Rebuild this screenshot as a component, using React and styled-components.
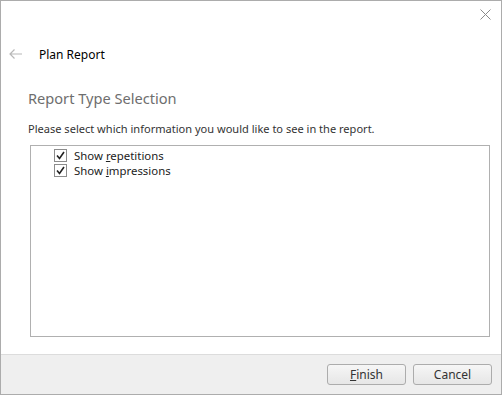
import React from 'react';
import styled, { createGlobalStyle } from 'styled-components';

const Global = createGlobalStyle`
  html, body { margin: 0; padding: 0; background: #fff; }
  body { font-family: "Noto Sans", "Open Sans", sans-serif; }
`;

const Window = styled.div`
  width: 502px;
  height: 395px;
  box-sizing: border-box;
  border: 1px solid #acacac;
  background: #fff;
  display: flex;
  flex-direction: column;
`;

const TitleBar = styled.div`
  height: 40px;
  display: flex;
  justify-content: flex-end;
  align-items: flex-start;
  padding-right: 10px;
  padding-top: 8px;
  box-sizing: border-box;
`;

const Close = styled.button`
  border: none;
  background: none;
  padding: 0;
  width: 11px;
  height: 11px;
  display: flex;
`;

const Header = styled.div`
  display: flex;
  align-items: center;
  height: 26px;
  padding-left: 8px;
  gap: 17px;
  font-size: 12px;
  color: #000;
`;

const Body = styled.div`
  flex: 1;
  display: flex;
  flex-direction: column;
  padding: 0 11px 17px 29px;
`;

const PageTitle = styled.h1`
  margin: 20px 0 0 -2px;
  font-size: 14.6px;
  font-weight: 400;
  color: #6e6e6e;
  line-height: 22px;
`;

const Prompt = styled.p`
  margin: 12px 0 0 -2px;
  font-size: 11.05px;
  color: #333;
  line-height: 16px;
`;

const ListBox = styled.div`
  flex: 1;
  margin-top: 8px;
  border: 1px solid #b0b0b0;
  padding: 2px 0 0 23px;
`;

const Option = styled.label`
  display: flex;
  align-items: center;
  gap: 7px;
  height: 15px;
  line-height: 15px;
  font-size: 11.4px;
  color: #222;
`;

const Box = styled.span`
  width: 11px;
  height: 11px;
  border: 1px solid #8c8c8c;
  background: #fff;
  display: flex;
  align-items: center;
  justify-content: center;
`;

const Footer = styled.div`
  height: 39px;
  background: #efefef;
  border-top: 1px solid #dcdcdc;
  display: flex;
  justify-content: flex-end;
  align-items: center;
  gap: 7px;
  padding-right: 9px;
`;

const Button = styled.button`
  width: 79px;
  height: 21px;
  box-sizing: border-box;
  border: 1px solid #acacac;
  border-radius: 3px;
  background: linear-gradient(#f6f6f6, #e6e6e6);
  font-family: "Noto Sans", sans-serif;
  font-size: 12px;
  color: #333;
  padding: 0;
  line-height: 17px;
`;

const Check = () => (
  <svg width="9" height="9" viewBox="0 0 9 9">
    <path d="M1 4.5 L3.5 7.5 L8 1" fill="none" stroke="#222" strokeWidth="1.6" />
  </svg>
);

const App = () => {
  const options = [
    { key: 'r', pre: 'Show ', u: 'r', rest: 'epetitions' },
    { key: 'i', pre: 'Show ', u: 'i', rest: 'mpressions' },
  ];
  return (
    <>
      <Global />
      <Window>
        <TitleBar>
          <Close aria-label="Close">
            <svg width="11" height="11" viewBox="0 0 11 11">
              <path d="M0.5 0.5 L10.5 10.5 M10.5 0.5 L0.5 10.5" stroke="#8a8a8a" strokeWidth="1" />
            </svg>
          </Close>
        </TitleBar>
        <Header>
          <svg width="13" height="10" viewBox="0 0 13 10">
            <path d="M1 5 H13 M5.5 0.5 L1 5 L5.5 9.5" fill="none" stroke="#b8b8b8" strokeWidth="1.2" />
          </svg>
          <span>Plan Report</span>
        </Header>
        <Body>
          <PageTitle>Report Type Selection</PageTitle>
          <Prompt>Please select which information you would like to see in the report.</Prompt>
          <ListBox>
            {options.map((o) => (
              <Option key={o.key}>
                <Box><Check /></Box>
                <span>{o.pre}<u>{o.u}</u>{o.rest}</span>
              </Option>
            ))}
          </ListBox>
        </Body>
        <Footer>
          <Button><u>F</u>inish</Button>
          <Button>Cancel</Button>
        </Footer>
      </Window>
    </>
  );
};

export default App;
